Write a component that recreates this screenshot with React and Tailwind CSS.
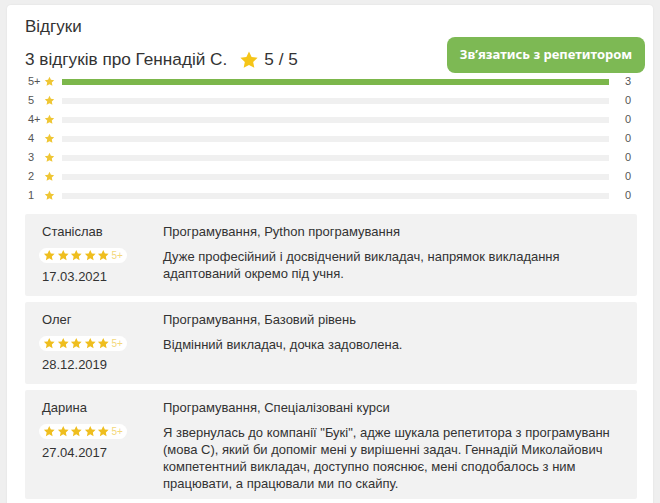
import React from "react";

const Star = ({ size = 12, color = "#f2c21a" }) => (
  <svg width={size} height={size} viewBox="0 0 24 24" className="shrink-0">
    <path
      d="M12 1.8l3.1 6.6 7.2.9-5.3 5 1.4 7.1L12 17.9l-6.4 3.5L7 14.3 1.7 9.3l7.2-.9z"
      fill={color}
    />
  </svg>
);

const rows = [
  { label: "5+", count: 3, pct: 100 },
  { label: "5", count: 0, pct: 0 },
  { label: "4+", count: 0, pct: 0 },
  { label: "4", count: 0, pct: 0 },
  { label: "3", count: 0, pct: 0 },
  { label: "2", count: 0, pct: 0 },
  { label: "1", count: 0, pct: 0 },
];

const reviews = [
  {
    name: "Станіслав",
    date: "17.03.2021",
    subject: "Програмування, Python програмування",
    lines: [
      "Дуже професійний і досвідчений викладач, напрямок викладання",
      "адаптований окремо під учня.",
    ],
  },
  {
    name: "Олег",
    date: "28.12.2019",
    subject: "Програмування, Базовий рівень",
    lines: ["Відмінний викладач, дочка задоволена."],
  },
  {
    name: "Дарина",
    date: "27.04.2017",
    subject: "Програмування, Спеціалізовані курси",
    lines: [
      "Я звернулась до компанії \"Букі\", адже шукала репетитора з програмуванн",
      "(мова С), який би допоміг мені у вирішенні задач. Геннадій Миколайович",
      "компетентний викладач, доступно пояснює, мені сподобалось з ним",
      "працювати, а працювали ми по скайпу.",
    ],
  },
];

export default function App() {
  return (
    <div
      className="w-[660px] h-[503px] bg-[#efefef] pt-[5px] pl-[7px] overflow-hidden text-[#333]"
      style={{ fontFamily: '"Liberation Sans", Arial, sans-serif' }}
    >
      <div className="w-[646px] h-[520px] bg-white rounded-[4px] shadow-[0_0_2px_rgba(0,0,0,0.08)] pl-[18px] pr-[16px] pt-[12px]">
        <div className="text-[17px] leading-[20px] text-[#333]">Відгуки</div>
        <div className="flex items-start justify-between mt-[11px] h-[24px]">
          <div className="flex items-center h-[24px] text-[17.2px] text-[#333]">
            <span>3 відгуків про Геннадій С.</span>
            <span className="ml-[12px] mr-[5px]">
              <Star size={20} color="#f5c518" />
            </span>
            <span>5 / 5</span>
          </div>
          <button
            className="shrink-0 mt-[-11px] h-[36px] w-[198px] rounded-[8px] bg-[#7db954] text-white text-[13px] font-bold mr-[-8px]"
            style={{ fontFamily: '"Noto Sans", sans-serif' }}
          >
            Зв’язатись з репетитором
          </button>
        </div>
        <div className="flex flex-col">
          {rows.map((r) => (
            <div key={r.label} className="flex items-center h-[19px]">
              <span className="w-[19px] pl-[3px] text-[11px] text-[#555]">{r.label}</span>
              <Star size={11} color="#efc634" />
              <div className="ml-[7px] w-[547px] h-[6px] bg-[#f0f0f0]">
                <div className="h-full bg-[#7cb74b]" style={{ width: `${r.pct}%` }} />
              </div>
              <span className="ml-[16px] text-[11px] text-[#555]">{r.count}</span>
            </div>
          ))}
        </div>
        <div className="mt-[9px] flex flex-col gap-[6px] w-[612px]">
          {reviews.map((rv) => (
            <div key={rv.name} className="bg-[#f2f2f2] rounded-[2px] flex pl-[17px] pt-[9px] pb-[7px]">
              <div className="w-[121px] shrink-0 text-[13px] pb-[4px]">
                <div className="leading-[17px]">{rv.name}</div>
                <div className="mt-[8px] ml-[-3px] flex w-fit items-center gap-[1px] bg-white rounded-full px-[4px] h-[15px]">
                  {[0, 1, 2, 3, 4].map((i) => (
                    <Star key={i} size={12.5} color="#efbe1e" />
                  ))}
                  <span className="ml-[1px] text-[10px] leading-[12px] text-[#f3d77a]">5+</span>
                </div>
                <div className="mt-[5px] leading-[17px] text-[13px]">{rv.date}</div>
              </div>
              <div className="text-[13px]">
                <div className="leading-[17px]">{rv.subject}</div>
                <div className="mt-[8px] leading-[17px]">
                  {rv.lines.map((l, i) => (
                    <div key={i} className="whitespace-nowrap">{l}</div>
                  ))}
                </div>
              </div>
            </div>
          ))}
        </div>
      </div>
    </div>
  );
}
